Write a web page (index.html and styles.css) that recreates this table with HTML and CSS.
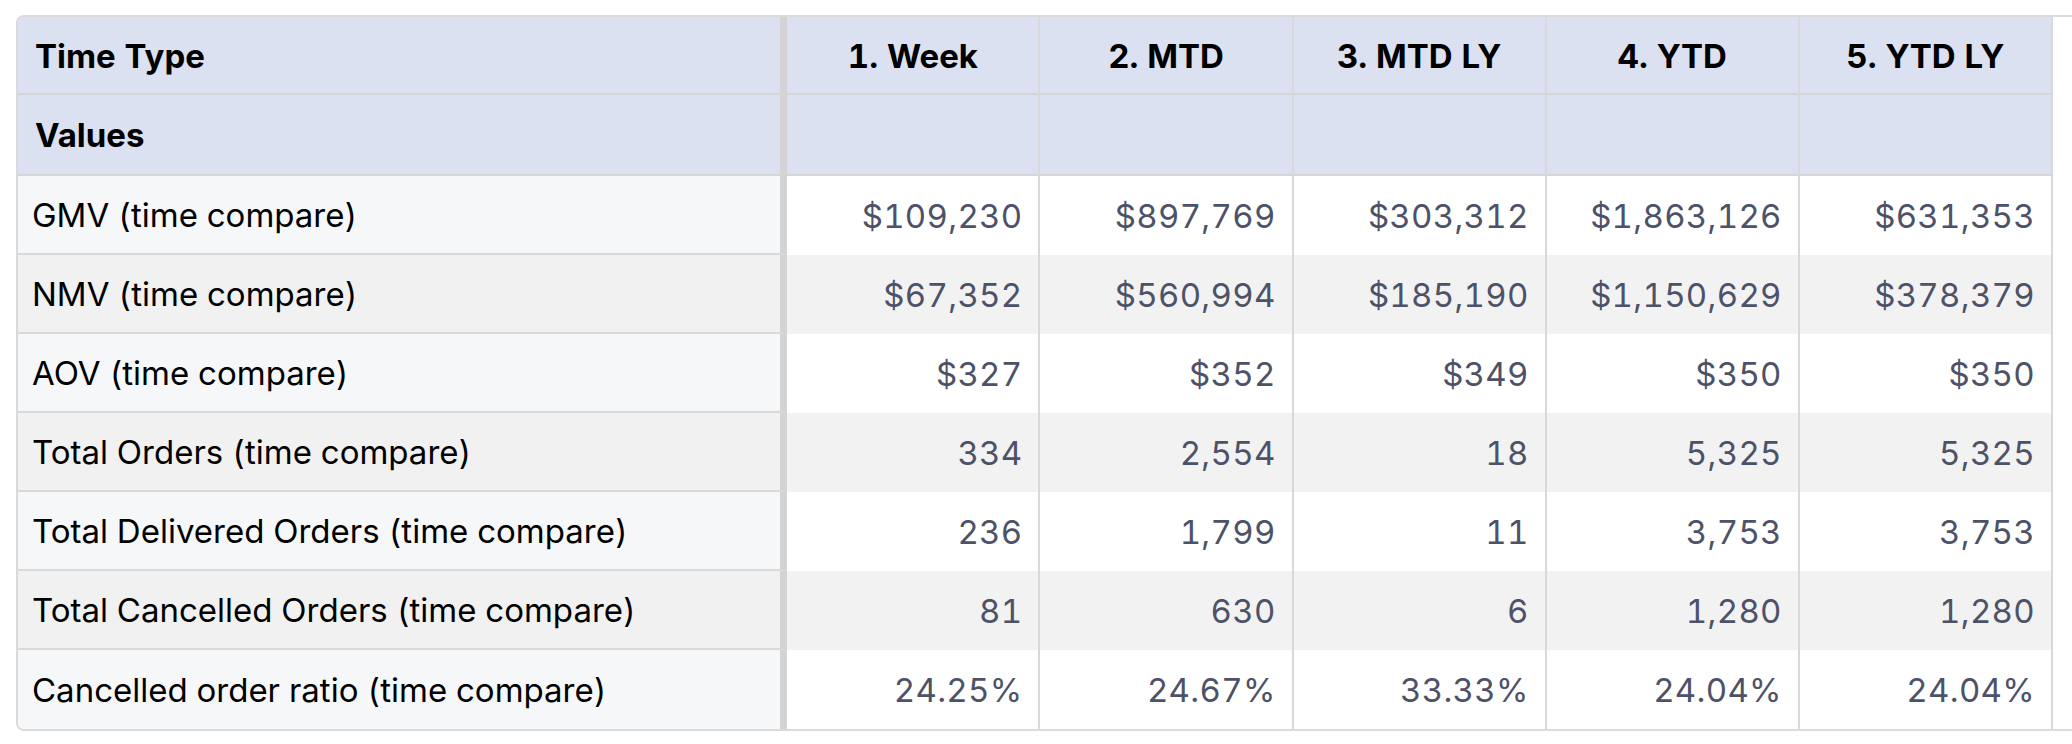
FILE: index.html
```html
<!DOCTYPE html>
<html lang="en">
<head>
<meta charset="utf-8">
<title>Time compare</title>
<link rel="stylesheet" href="styles.css">
</head>
<body>
<div class="frame">
  <table class="grid">
    <colgroup>
      <col class="c-stub">
      <col class="c-val"><col class="c-val"><col class="c-val"><col class="c-val"><col class="c-val">
    </colgroup>
    <thead>
      <tr class="hrow hrow-1">
        <th class="stub">Time Type</th>
        <th>1. Week</th><th>2. MTD</th><th>3. MTD LY</th><th>4. YTD</th><th>5. YTD LY</th>
      </tr>
      <tr class="hrow hrow-2">
        <th class="stub">Values</th>
        <th></th><th></th><th></th><th></th><th></th>
      </tr>
    </thead>
    <tbody>
      <tr class="row">
        <th class="stub">GMV (time compare)</th>
        <td>$109,230</td><td>$897,769</td><td>$303,312</td><td>$1,863,126</td><td>$631,353</td>
      </tr>
      <tr class="row">
        <th class="stub">NMV (time compare)</th>
        <td>$67,352</td><td>$560,994</td><td>$185,190</td><td>$1,150,629</td><td>$378,379</td>
      </tr>
      <tr class="row">
        <th class="stub">AOV (time compare)</th>
        <td>$327</td><td>$352</td><td>$349</td><td>$350</td><td>$350</td>
      </tr>
      <tr class="row">
        <th class="stub">Total Orders (time compare)</th>
        <td>334</td><td>2,554</td><td>18</td><td>5,325</td><td>5,325</td>
      </tr>
      <tr class="row">
        <th class="stub">Total Delivered Orders (time compare)</th>
        <td>236</td><td>1,799</td><td>11</td><td>3,753</td><td>3,753</td>
      </tr>
      <tr class="row">
        <th class="stub">Total Cancelled Orders (time compare)</th>
        <td>81</td><td>630</td><td>6</td><td>1,280</td><td>1,280</td>
      </tr>
      <tr class="row">
        <th class="stub">Cancelled order ratio (time compare)</th>
        <td>24.25%</td><td>24.67%</td><td>33.33%</td><td>24.04%</td><td>24.04%</td>
      </tr>
    </tbody>
  </table>
</div>
</body>
</html>
```

FILE: styles.css
```css
html, body {
  margin: 0;
  padding: 0;
  background: #ffffff;
  overflow: hidden;
}

body {
  font-family: Inter, "Noto Sans", "Liberation Sans", sans-serif;
  font-size: 33px;
  color: #000;
  font-variant-numeric: tabular-nums;
}

.frame {
  margin: 15px 0 0 16px;
  width: 2100px;
  border: 2px solid #dadada;
  border-right: none;
  border-radius: 8px 0 0 8px;
  overflow: hidden;
  background: #fff;
}

.grid {
  table-layout: fixed;
  border-collapse: separate;
  border-spacing: 0;
  width: 2035px;
}

.c-stub { width: 769px; }
.c-val { width: 253px; }

.grid th,
.grid td {
  padding: 1px 16px 0;
  line-height: 40px;
  white-space: nowrap;
  border-right: 2px solid #d9d9d9;
}

.grid .stub {
  text-align: left;
  padding-left: 14px;
  border-right: 7px solid #d3d3d3;
}

/* header rows */
.hrow th {
  background: #dbe1f1;
  font-weight: 700;
  text-align: center;
  border-bottom: 2px solid #d5d5d5;
}
.hrow .stub {
  padding-left: 17px;
}
.hrow-1 { height: 78px; }
.hrow-2 { height: 81px; }

/* body rows */
.row { height: 79px; }

.row .stub {
  font-weight: 400;
  background: #f6f7f9;
  border-bottom: 2px solid #d9d9d9;
}
.row td {
  text-align: right;
  color: #4d5268;
  background: #ffffff;
  letter-spacing: 0.3px;
}
.row:nth-child(even) .stub { background: #f1f1f1; }
.row:nth-child(even) td { background: #f2f2f2; }
.row:last-child .stub { border-bottom: none; }
```
